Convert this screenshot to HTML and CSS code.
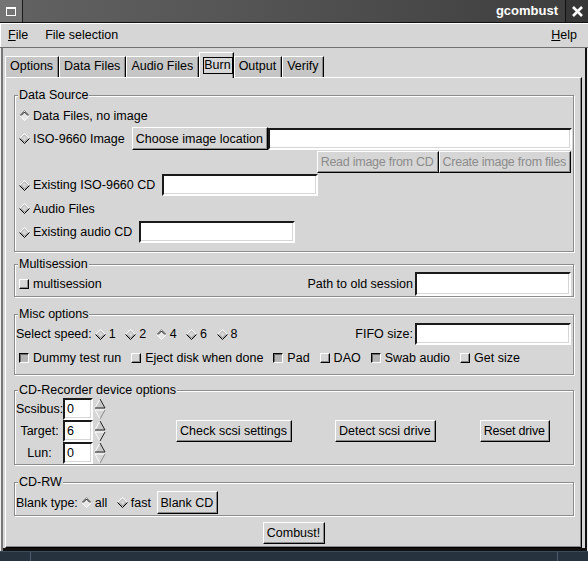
FILE: index.html
```html
<!DOCTYPE html>
<html lang="en">
<head>
    <meta charset="utf-8">
    <title>gcombust</title>
    <link rel="stylesheet" href="styles.css">
</head>
<body>
    <svg class="defs" width="0" height="0">
        <symbol id="radio-off" viewBox="0 0 11 11">
            <polygon points="5.5,0.5 10.5,5.5 5.5,10.5 0.5,5.5" fill="#d6d6d6" />
            <path d="M0.5 5.5 L5.5 0.5 L10.5 5.5" stroke="#fff" fill="none" />
            <path d="M2 5.5 L5.5 2 L9 5.5" stroke="#b4b4b4" fill="none" />
            <path d="M0.5 5.5 L5.5 10.5 L10.5 5.5" stroke="#000" fill="none" />
            <path d="M2 5.5 L5.5 9 L9 5.5" stroke="#8a8a8a" fill="none" />
        </symbol>
        <symbol id="radio-on" viewBox="0 0 11 11">
            <polygon points="5.5,0.5 10.5,5.5 5.5,10.5 0.5,5.5" fill="#e6e6e6" />
            <path d="M0.5 5.5 L5.5 0.5 L10.5 5.5" stroke="#8a8a8a" fill="none" />
            <path d="M2 5.5 L5.5 2 L9 5.5" stroke="#000" fill="none" />
            <path d="M0.5 5.5 L5.5 10.5 L10.5 5.5" stroke="#fff" fill="none" />
        </symbol>
    </svg>

    <div class="titlebar">
        <div class="win-icon"><span></span></div>
        <div class="title">gcombust</div>
        <div class="close">
            <svg width="11" height="11" viewBox="0 0 11 11"><path d="M1 1 L10 10 M10 1 L1 10" stroke="#fff" stroke-width="2.6" /></svg>
        </div>
    </div>

    <div class="menubar">
        <span class="menu-item"><u>F</u>ile</span>
        <span class="menu-item">File selection</span>
        <span class="menu-item help"><u>H</u>elp</span>
    </div>

    <div class="workarea">
        <div class="tabs">
            <div class="tab">Options</div>
            <div class="tab">Data Files</div>
            <div class="tab">Audio Files</div>
            <div class="tab active"><span class="focus">Burn</span></div>
            <div class="tab">Output</div>
            <div class="tab">Verify</div>
        </div>

        <div class="page">
            <fieldset class="frame data-source">
                <legend>Data Source</legend>
                <div class="row">
                    <span class="radio"><svg class="diamond"><use href="#radio-on" /></svg>Data Files, no image</span>
                </div>
                <div class="row">
                    <span class="radio"><svg class="diamond"><use href="#radio-off" /></svg>ISO-9660 Image</span>
                    <button class="btn btn-choose">Choose image location</button>
                    <input class="entry grow" type="text">
                </div>
                <div class="row right">
                    <button class="btn" disabled>Read image from CD</button>
                    <button class="btn" disabled>Create image from files</button>
                </div>
                <div class="row tall">
                    <span class="radio"><svg class="diamond"><use href="#radio-off" /></svg>Existing ISO-9660 CD</span>
                    <input class="entry short after-label" type="text">
                </div>
                <div class="row">
                    <span class="radio"><svg class="diamond"><use href="#radio-off" /></svg>Audio Files</span>
                </div>
                <div class="row tall">
                    <span class="radio"><svg class="diamond"><use href="#radio-off" /></svg>Existing audio CD</span>
                    <input class="entry short after-label" type="text">
                </div>
            </fieldset>

            <fieldset class="frame multisession">
                <legend>Multisession</legend>
                <div class="row tall">
                    <span class="checkopt"><i class="check"></i>multisession</span>
                    <span class="push">Path to old session</span>
                    <input class="entry short side" type="text">
                </div>
            </fieldset>

            <fieldset class="frame misc">
                <legend>Misc options</legend>
                <div class="row tall">
                    <span>Select speed:</span>
                    <span class="radio inline"><svg class="diamond"><use href="#radio-off" /></svg>1</span>
                    <span class="radio inline"><svg class="diamond"><use href="#radio-off" /></svg>2</span>
                    <span class="radio inline"><svg class="diamond"><use href="#radio-on" /></svg>4</span>
                    <span class="radio inline"><svg class="diamond"><use href="#radio-off" /></svg>6</span>
                    <span class="radio inline"><svg class="diamond"><use href="#radio-off" /></svg>8</span>
                    <span class="push">FIFO size:</span>
                    <input class="entry short side" type="text">
                </div>
                <div class="row">
                    <span class="checkopt"><i class="check on"></i>Dummy test run</span>
                    <span class="checkopt"><i class="check"></i>Eject disk when done</span>
                    <span class="checkopt"><i class="check on"></i>Pad</span>
                    <span class="checkopt"><i class="check"></i>DAO</span>
                    <span class="checkopt"><i class="check on"></i>Swab audio</span>
                    <span class="checkopt"><i class="check"></i>Get size</span>
                </div>
            </fieldset>

            <fieldset class="frame recorder">
                <legend>CD-Recorder device options</legend>
                <div class="recorder-body">
                    <div class="spin-col">
                        <div class="spin-row">
                            <span class="spin-label">Scsibus:</span>
                            <input class="entry spin" type="text" value="0">
                            <svg class="arrows" width="12" height="22" viewBox="0 0 12 22">
                                <polygon points="6,1 11,10 1,10" fill="#c8c8c8" />
                                <path d="M1 10 L6 1" stroke="#fff" fill="none" />
                                <path d="M6 1 L11 10 L1 10" stroke="#222" fill="none" />
                                <path d="M1 12 L11 12 M1 12 L6 21" stroke="#fff" fill="none" />
                                <path d="M11 12 L6 21" stroke="#8a8a8a" fill="none" />
                            </svg>
                        </div>
                        <div class="spin-row">
                            <span class="spin-label">Target:</span>
                            <input class="entry spin" type="text" value="6">
                            <svg class="arrows" width="12" height="22" viewBox="0 0 12 22">
                                <polygon points="6,1 11,10 1,10" fill="#c8c8c8" />
                                <path d="M1 10 L6 1" stroke="#fff" fill="none" />
                                <path d="M6 1 L11 10 L1 10" stroke="#222" fill="none" />
                                <path d="M1 12 L11 12 M1 12 L6 21" stroke="#fff" fill="none" />
                                <path d="M11 12 L6 21" stroke="#222" fill="none" />
                            </svg>
                        </div>
                        <div class="spin-row">
                            <span class="spin-label">Lun:</span>
                            <input class="entry spin" type="text" value="0">
                            <svg class="arrows" width="12" height="22" viewBox="0 0 12 22">
                                <polygon points="6,1 11,10 1,10" fill="#c8c8c8" />
                                <path d="M1 10 L6 1" stroke="#fff" fill="none" />
                                <path d="M6 1 L11 10 L1 10" stroke="#222" fill="none" />
                                <path d="M1 12 L11 12 M1 12 L6 21" stroke="#fff" fill="none" />
                                <path d="M11 12 L6 21" stroke="#8a8a8a" fill="none" />
                            </svg>
                        </div>
                    </div>
                    <button class="btn btn-check">Check scsi settings</button>
                    <button class="btn btn-detect">Detect scsi drive</button>
                    <button class="btn btn-reset">Reset drive</button>
                </div>
            </fieldset>

            <fieldset class="frame cdrw">
                <legend>CD-RW</legend>
                <div class="row blank-row">
                    <span>Blank type:</span>
                    <span class="radio inline"><svg class="diamond"><use href="#radio-on" /></svg>all</span>
                    <span class="radio inline"><svg class="diamond"><use href="#radio-off" /></svg>fast</span>
                    <button class="btn btn-blank">Blank CD</button>
                </div>
            </fieldset>

            <div class="combust-row">
                <button class="btn">Combust!</button>
            </div>
        </div>
    </div>

    <div class="taskbar"></div>
</body>
</html>
```

FILE: styles.css
```css
* {
    box-sizing: border-box;
}
body {
    margin: 0;
    width: 588px;
    height: 561px;
    overflow: hidden;
    display: flex;
    flex-direction: column;
    background: #d6d6d6;
    font-family: "Liberation Sans", Arial, sans-serif;
    font-size: 12.5px;
    color: #000;
}
.defs {
    position: absolute;
    width: 0;
    height: 0;
}

/* window manager decoration */
.titlebar {
    display: flex;
    flex-shrink: 0;
    height: 23px;
    border-bottom: 1px solid #111;
    background: linear-gradient(90deg, #626262, #555 40%, #474747 75%, #3d3d3d);
}
.win-icon {
    width: 23px;
    display: flex;
    align-items: center;
    justify-content: center;
    background: #747474;
    border-right: 1px solid #1a1a1a;
}
.win-icon span {
    width: 10px;
    height: 9px;
    border: 1px solid #fff;
    border-top-width: 2px;
}
.title {
    flex: 1;
    text-align: right;
    padding-right: 7px;
    color: #fff;
    font-weight: bold;
    font-size: 13px;
    line-height: 22px;
}
.close {
    width: 23px;
    display: flex;
    align-items: center;
    justify-content: center;
    background: #363636;
    border-left: 1px solid #111;
}

.menubar {
    display: flex;
    align-items: center;
    flex-shrink: 0;
    height: 25px;
    padding: 0 11px 1px 8px;
    border-bottom: 1px solid #707070;
    box-shadow: inset 0 1px #fff, inset 1px 0 #fff;
}
.menu-item {
    margin-right: 17px;
}
.menu-item.help {
    margin-left: auto;
    margin-right: 0;
}

.workarea {
    flex: 1;
    display: flex;
    flex-direction: column;
    padding: 4px 6px 3px 5px;
    box-shadow: inset 1px 0 #eee, inset 3px 0 #777, inset -1px 0 #eee, inset -3px 0 #111, inset 0 -3px #111;
}

/* notebook */
.tabs {
    display: flex;
    align-items: flex-end;
    height: 25px;
    flex-shrink: 0;
}
.tab {
    height: 21px;
    line-height: 19px;
    padding: 0 5px 0 4px;
    background: #c6c6c6;
    border: 1px solid;
    border-color: #fff #000 transparent #fff;
    border-bottom: 0;
    box-shadow: inset -1px 0 #8a8a8a;
}
.tab.active {
    position: relative;
    z-index: 1;
    height: 26px;
    margin-bottom: -1px;
    padding: 3px 0 0 3px;
    background: #d6d6d6;
}
.focus {
    display: inline-block;
    border: 1px solid #000;
    padding: 0 1px 0 0;
    line-height: 15px;
}
.page {
    flex: 1;
    display: flex;
    flex-direction: column;
    padding: 10px 7px 0 8px;
    border: 1px solid;
    border-color: #fff #000 #000 #fff;
    box-shadow: inset -1px -1px #8a8a8a;
}

/* frames */
.frame {
    margin: 0;
    padding: 0 1px;
    min-width: 0;
    border: 1px solid #8c8c8c;
    box-shadow: inset 1px 1px #fff, 1px 1px #fff;
}
.frame legend {
    margin-left: 2px;
    padding: 0 1px;
    line-height: 14px;
    background: #d6d6d6;
}
.data-source {
    padding-top: 2px;
    padding-bottom: 7px;
}
.multisession {
    margin-top: 5px;
    padding-top: 1px;
}
.misc {
    margin-top: 10px;
    padding-top: 1px;
    padding-bottom: 5px;
}
.recorder {
    margin-top: 8px;
    padding-top: 1px;
}
.cdrw {
    margin-top: 10px;
    padding-top: 1px;
}

.row {
    display: flex;
    align-items: center;
    height: 23px;
}
.row.tall {
    height: 24px;
}
.row.right {
    justify-content: flex-end;
    padding-right: 1px;
}
.blank-row {
    height: 25px;
}
.push {
    margin-left: auto;
}

/* radio diamonds and check boxes */
.radio,
.checkopt {
    display: flex;
    align-items: center;
    white-space: nowrap;
}
.diamond {
    width: 11px;
    height: 11px;
    margin: 0 3px 0 3px;
}
.radio.inline {
    margin-right: 6.5px;
}
.check {
    width: 10px;
    height: 10px;
    margin: 0 4px 0 3px;
    border: 1px solid;
    border-color: #fff #000 #000 #fff;
    box-shadow: inset -1px -1px #8a8a8a;
}
.check.on {
    border-color: #000 #fff #fff #000;
    background: #b4b4b4;
    box-shadow: inset 1px 1px #6a6a6a;
}
.checkopt {
    margin-right: 7px;
}

/* widgets */
.btn {
    height: 22px;
    padding: 0 4px 0 3px;
    font: inherit;
    color: #000;
    background: #d6d6d6;
    border: 1px solid;
    border-color: #fff #000 #000 #fff;
    box-shadow: inset -1px -1px #8a8a8a;
    white-space: nowrap;
}
.btn:disabled {
    color: #8c8c8c;
    letter-spacing: -0.25px;
}
.btn-choose {
    height: 23px;
    margin-left: 7px;
}
.btn-blank {
    height: 23px;
    margin-left: -1px;
}
.entry {
    height: 22px;
    padding: 0 2px;
    font: inherit;
    background: #fff;
    border: 2px solid;
    border-color: #1a1a1a #fff #fff #1a1a1a;
    box-shadow: inset -1px -1px #d6d6d6;
    outline: none;
}
.entry.grow {
    flex: 1;
    min-width: 0;
}
.entry.short {
    width: 156px;
}
.entry.after-label {
    margin-left: 7px;
}
.entry.side {
    margin: 0 1px 0 2px;
}
.multisession .entry {
    height: 24px;
}

/* cd recorder spin buttons */
.recorder-body {
    display: flex;
    align-items: center;
}
.spin-row {
    display: flex;
    align-items: center;
    height: 22px;
}
.spin-label {
    width: 47px;
    text-align: center;
}
.entry.spin {
    width: 30px;
    height: 22px;
}
.arrows {
    margin-left: 1px;
}
.btn-check {
    margin-left: 70px;
}
.btn-detect {
    margin-left: 43px;
}
.btn-reset {
    margin-left: 44px;
    letter-spacing: -0.2px;
}

.combust-row {
    margin-top: 6px;
    text-align: center;
}

.taskbar {
    flex-shrink: 0;
    height: 10px;
    border-top: 1px solid #3c4959;
    background:
        linear-gradient(#4c5a6b, #4c5a6b) 30px 0 / 1px 100% no-repeat,
        linear-gradient(#4c5a6b, #4c5a6b) 557px 0 / 1px 100% no-repeat,
        #27323f;
}
```
